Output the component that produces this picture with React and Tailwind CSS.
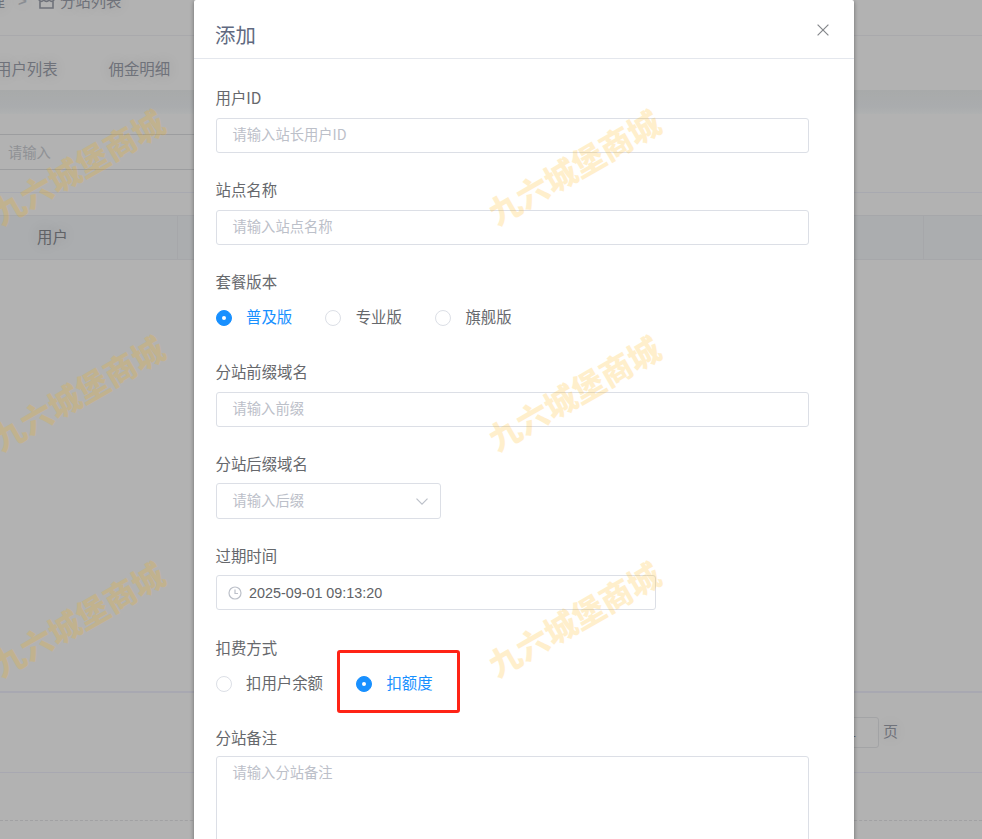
const cjk = "font-['Noto_Sans_CJK_SC',sans-serif]";

function Watermarks() {
  const spots = [
    'left-[-23px] top-[142px]',
    'left-[473px] top-[142px]',
    'left-[-23px] top-[368px]',
    'left-[473px] top-[368px]',
    'left-[-23px] top-[594px]',
    'left-[473px] top-[594px]',
  ];
  return (
    <div className="pointer-events-none absolute inset-0 overflow-hidden">
      {spots.map((spot) => (
        <span
          key={spot}
          className={`absolute ${spot} flex h-12 w-[201px] -rotate-30 items-center justify-center whitespace-nowrap text-[32px] leading-none font-black text-[#ffb000]/20`}
        >
          九六城堡商城
        </span>
      ))}
    </div>
  );
}

function StoreIcon() {
  return (
    <svg className="-mt-px h-[17px] w-[17px]" viewBox="0 0 17 17" fill="none" stroke="currentColor" strokeWidth="1.6">
      <path d="M3 1.500h11l2 5.500c0 3-3.800 3-5 .6-1 2.400-4 2.400-5 0C4.800 10 1 10 1 7zM2 9.200V16h13V9.200M6 5v2.500M11 5v2.500" />
    </svg>
  );
}

function Backdrop() {
  return (
    <div className="flex h-full flex-col bg-[#b2b2b2] text-[15.400px] text-[#6f727a]">
      <div className="h-9 shrink-0 border-b border-[#a9a9ac]">
        <div className="-mt-[10px] -ml-[10.500px] flex h-[22px] items-center whitespace-nowrap [text-shadow:0_0_15px_rgba(0,0,0,0.12)]">
          <span>理</span>
          <span className="ml-[13px] w-[12px] font-['Liberation_Sans',sans-serif] text-[15px] font-bold text-[#8b8e93]">&gt;</span>
          <span className="ml-2 flex w-[22px]"><StoreIcon /></span>
          <span>分站列表</span>
        </div>
      </div>
      <div className="-ml-[4px] flex h-[54px] shrink-0 items-center gap-[51px] pt-[17px] pb-[5px] [text-shadow:0_0_15px_rgba(0,0,0,0.12)]">
        <span>用户列表</span>
        <span>佣金明细</span>
      </div>
      <div className="h-6 shrink-0 bg-linear-to-b from-[#a8aaaa] via-[#aaacae] via-70% to-[#afb1b1]" />
      <div className="h-[79px] shrink-0 border-b border-[#a8a9b0] pt-5">
        <div className="-ml-3 flex h-9 w-[320px] items-center border border-[#9c9d9f] pb-[1px] pl-[19px] text-[14.300px] text-[#8f9195]">请输入</div>
      </div>
      <div className="mt-[22px] flex h-[45px] shrink-0 items-center border-y border-[#a6a7aa] bg-[#abadaf]">
        <div className="flex h-full w-[178px] items-center border-r border-[#a6a7aa] pb-[2px] pl-[37px] text-[#606266] [text-shadow:0_0_15px_rgba(0,0,0,0.16)]">用户</div>
        <div className="h-full w-[746px] border-r border-[#a6a7aa]" />
      </div>
      <div className="mt-[431px] h-[2px] shrink-0 bg-[#a8a8b1]" />
      <div className="flex h-[80px] shrink-0 items-center justify-end border-b border-[#a8a8b1] pr-[84px]">
        <div className="flex h-[31px] w-[54px] items-center justify-center rounded-[3px] border border-[#a3a4a6] font-['Liberation_Sans',sans-serif] text-[14.300px] text-[#606266]">1</div>
        <span className="-mt-[2px] ml-1 text-[15px] [text-shadow:0_0_15px_rgba(0,0,0,0.12)]">页</span>
      </div>
      <div className="h-12 shrink-0 border-b border-dashed border-[#a1a1a3]" />
    </div>
  );
}

function Label({ children }) {
  return <div className="-ml-[0.5px] flex h-5 items-center text-[15.400px] text-[#66686c]">{children}</div>;
}

function Field({ label, placeholder }) {
  return (
    <div className="mb-[27px]">
      <Label>{label}</Label>
      <div className="mt-[10px] flex h-[35px] items-center rounded-[3px] border border-[#dcdfe6] px-[15.500px] pb-[3px] text-[14.300px] text-[#bcc0c9]">
        {placeholder}
      </div>
    </div>
  );
}

function Radio({ checked, children }) {
  return (
    <div className={`flex h-5 items-center gap-[14.500px] text-[15.400px] ${checked ? 'text-[#1890ff]' : 'text-[#66686c]'}`}>
      <span
        className={`flex h-4 w-4 items-center justify-center rounded-full border ${checked ? 'border-[#1890ff] bg-[#1890ff]' : 'border-[#dcdfe6] bg-white'}`}
      >
        {checked && <span className="h-1 w-1 rounded-full bg-white" />}
      </span>
      <span className="-mt-[2px] whitespace-nowrap">{children}</span>
    </div>
  );
}

function Dialog() {
  return (
    <div className="absolute top-0 left-[194px] h-[860px] w-[660px] rounded-t-[2px] bg-white shadow-[0_1px_4px_rgba(0,0,0,0.4)]">
      <header className="flex h-[59px] items-center justify-between border-b border-[#e4e7ed] pt-[9px] pr-[25px] pl-[21px]">
        <h1 className="text-[20.400px] leading-7 text-[#606980]">添加</h1>
        <svg className="-mt-[7px] h-3 w-3 text-[#85878b]" viewBox="0 0 12 12" fill="none" stroke="currentColor" strokeWidth="1.200">
          <path d="M.6.6l10.800 10.800M11.400.6L.6 11.400" />
        </svg>
      </header>
      <form className="pt-[29px] pr-[45px] pl-[22px]">
        <Field label="用户ID" placeholder="请输入站长用户ID" />
        <Field label="站点名称" placeholder="请输入站点名称" />
        <div className="mb-[34px]">
          <Label>套餐版本</Label>
          <div className="-ml-[0.5px] mt-4 flex gap-[33px]">
            <Radio checked>普及版</Radio>
            <Radio>专业版</Radio>
            <Radio>旗舰版</Radio>
          </div>
        </div>
        <Field label="分站前缀域名" placeholder="请输入前缀" />
        <div className="mb-[27px]">
          <Label>分站后缀域名</Label>
          <div className="mt-[9px] flex h-9 w-[225px] items-center justify-between rounded-[3px] border border-[#dcdfe6] pr-3 pl-[15.500px] text-[14.300px] text-[#bcc0c9]">
            <span className="-mt-[2px]">请输入后缀</span>
            <svg className="h-[7px] w-[12px]" viewBox="0 0 12 7" fill="none" stroke="currentColor" strokeWidth="1.200">
              <path d="M.5.6L6 6.100 11.500.6" />
            </svg>
          </div>
        </div>
        <div className="mb-7">
          <Label>过期时间</Label>
          <div className="mt-[9px] flex h-[35px] w-[440px] items-center rounded-[3px] border border-[#dcdfe6] pl-[11px]">
            <svg className="h-[14px] w-[14px] text-[#bcc0c9]" viewBox="0 0 14 14" fill="none" stroke="currentColor" strokeWidth="1.200">
              <circle cx="7" cy="7" r="6" />
              <path d="M7 3.500V7.500H10" />
            </svg>
            <span className="mt-[2px] ml-[7px] font-['Liberation_Sans',sans-serif] text-[14.350px] text-[#606266]">2025-09-01 09:13:20</span>
          </div>
        </div>
        <div className="mb-[34px]">
          <Label>扣费方式</Label>
          <div className="relative -ml-[0.5px] mt-4 flex gap-[33px]">
            <Radio>扣用户余额</Radio>
            <Radio checked>扣额度</Radio>
            <div className="absolute -top-[24px] left-[121.500px] h-[63px] w-[123px] rounded-[3px] border-3 border-[#ff2316]" />
          </div>
        </div>
        <Label>分站备注</Label>
        <div className="mt-2 h-[110px] rounded-[3px] border border-[#dcdfe6] px-[15.500px] pt-[4px] text-[14.300px] leading-[21px] text-[#bcc0c9]">
          请输入分站备注
        </div>
      </form>
    </div>
  );
}

export default function App() {
  return (
    <div className={`relative h-[839px] w-[982px] overflow-hidden ${cjk}`}>
      <Backdrop />
      <Dialog />
      <Watermarks />
    </div>
  );
}
